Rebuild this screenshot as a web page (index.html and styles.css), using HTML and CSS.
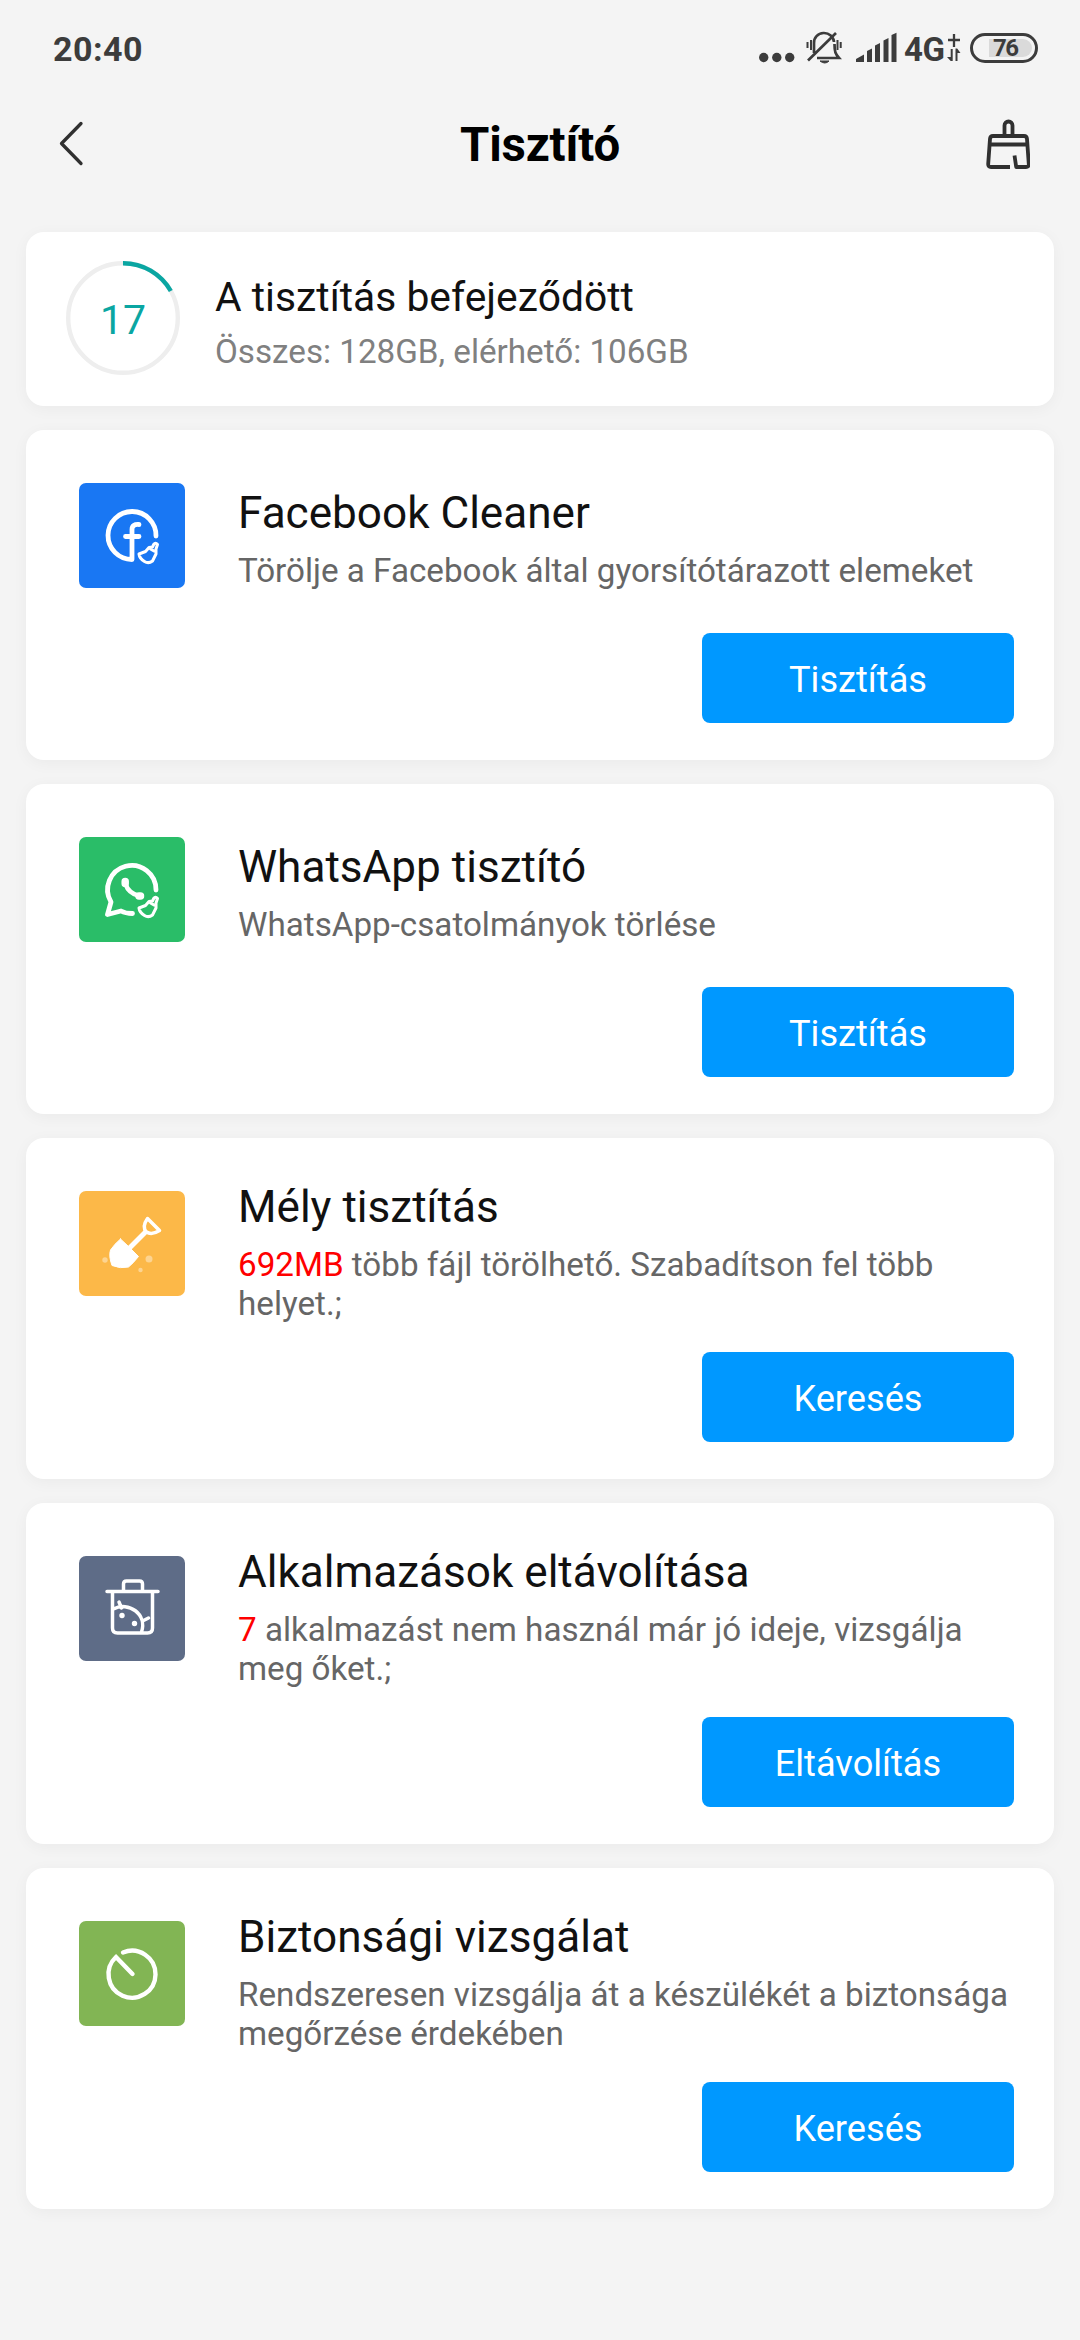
FILE: index.html
```html
<!DOCTYPE html>
<html lang="hu">
<head>
<meta charset="utf-8">
<title>Tisztító</title>
<link rel="stylesheet" href="styles.css">
</head>
<body>
<header class="status">
  <span class="clock">20:40</span>
  <div class="indicators">
    <svg class="dots" width="36" height="60" viewBox="0 0 36 60"><circle cx="4.7" cy="37.5" r="4.7"/><circle cx="17.8" cy="37.5" r="4.7"/><circle cx="30.7" cy="37.5" r="4.7"/></svg>
    <svg class="bell" width="36" height="60" viewBox="0 0 36 60" fill="none" stroke="#3c3c3c" stroke-width="2.7"><path d="M8 33V23a10 9.5 0 0 1 20-1M28.500 24c0 8 1 10 4.500 14H11M2 40.500 30 13"/><path d="M14 41h9q-4 4-9 0Z" fill="#3c3c3c" stroke-width="1"/><path d="M1.500 22v6M5 20v10M31.500 20v10M34.700 22v6" stroke-width="2"/></svg>
    <svg class="signal" width="41" height="60" viewBox="0 0 41 60"><path d="M0 42V39L8 34.500V42ZM11 42V31l5-2.500V42ZM19 42V25.500l5-2.500V42ZM27.500 42V20.500l5-2.500V42ZM35.500 42V15l5-2.200V42Z"/></svg>
    <span class="network">4G</span>
    <svg class="traffic" width="14" height="60" viewBox="0 0 14 60"><path d="M1 20h12M7 14v13" fill="none" stroke="#3c3c3c" stroke-width="2.300"/><path d="M3.700 29h2v12h-2L0 37h3.700ZM8.500 41V28.500h1.700l3.300 4.500h-3V41Z"/></svg>
    <span class="battery"><span class="level">76</span></span>
  </div>
</header>
<nav class="toolbar">
  <svg class="back" width="26" height="46" viewBox="0 0 26 46"><path d="M23 2.500 3.500 22.500 23 42.500" fill="none" stroke="#303030" stroke-width="3.300" stroke-linecap="round" stroke-linejoin="round"/></svg>
  <h1>Tisztító</h1>
  <svg class="brush" width="44" height="50" viewBox="0 0 44 50" fill="none" stroke="#303030" stroke-width="3.800" stroke-linejoin="round"><path d="M18.500 17V6.500a4 4 0 0 1 8 0V17M24 48H5Q2 48 2.200 45L4 20Q4.200 17 7 17H38Q40.800 17 41 20L42.800 45Q43 48 40 48H30.200L28.500 36.500M4 25.500H41"/></svg>
</nav>
<main>
  <section class="card summary">
    <div class="ring">
      <svg width="114" height="114" viewBox="0 0 114 114" fill="none" stroke-width="4.400"><circle cx="57" cy="57" r="54.800" stroke="#eee"/><path d="M57 2.200A54.800 54.800 0 0 1 104.800 30" stroke="#0aa6a2"/></svg>
      <span>17</span>
    </div>
    <div>
      <h2>A tisztítás befejeződött</h2>
      <p>Összes: 128GB, elérhető: 106GB</p>
    </div>
  </section>

  <section class="card single">
    <svg class="icon facebook" viewBox="0 0 105 105"><path d="M52.500 76.500A24 24 0 1 1 76.500 53M52.500 76.500V46.500q0-5.500 7-5M46 53.500H59.500" stroke-width="4.800"/><path class="broom" d="M73 64 74.200 61.500Q76 59 78 61.500L76.500 66V71L73 78Q69 81 65 78.500Q60 75.500 59.500 71L66 68.500 69.500 64.500ZM71 66 74.500 68"/></svg>
    <div class="text"><h2>Facebook Cleaner</h2><p>Törölje a Facebook által gyorsítótárazott elemeket</p></div>
    <button>Tisztítás</button>
  </section>

  <section class="card single">
    <svg class="icon whatsapp" viewBox="0 0 105 105"><path d="M76.500 53A24.200 24.200 0 1 0 31.500 65L28 77.500 41.500 74Q46 76.500 53 76.500" stroke-width="4.800"/><path d="M46 47Q49 56.500 60 59" stroke-width="4.500"/><path d="M45.700 44.500V46.500M59.500 59h1.500" stroke-width="7.500"/><path class="broom" d="M73 64 74.200 61.500Q76 59 78 61.500L76.500 66V71L73 78Q69 81 65 78.500Q60 75.500 59.500 71L66 68.500 69.500 64.500ZM71 66 74.500 68"/></svg>
    <div class="text"><h2>WhatsApp tisztító</h2><p>WhatsApp-csatolmányok törlése</p></div>
    <button>Tisztítás</button>
  </section>

  <section class="card">
    <svg class="icon deep" viewBox="0 0 105 105"><path d="M41 48 48.500 55 59 65.500Q53 73 49 76Q41 78 32.500 74.500Q29 65 31 59Q35 53 41 48Z" fill="#fff" stroke-width="1"/><path d="M50 57 66.500 40.500" stroke-width="5" stroke-linecap="butt"/><path d="M68 27.500 80 39.500Q72 44.500 67 41Q62 36 68 27.500Z" stroke-width="3.500"/><g fill="#fff" fill-opacity=".4" stroke="none"><circle cx="25.500" cy="69" r="2.700"/><circle cx="69.500" cy="68" r="3.500"/><circle cx="61" cy="79" r="2.200"/></g></svg>
    <div class="text"><h2>Mély tisztítás</h2><p><em>692MB</em> több fájl törölhető. Szabadítson fel több helyet.;</p></div>
    <button>Keresés</button>
  </section>

  <section class="card">
    <svg class="icon apps" viewBox="0 0 105 105"><path d="M27.500 35.500H78.500M33 36V72Q33 77 38 77H68Q73 77 73 72V36M44 35V28Q44 25 47 25H60Q63 25 63 28V35M34 53C49 45 68 58 62 76M42 52 39.500 46M63 65 69 62" stroke-width="3.500"/><g fill="#fff" stroke="none"><circle cx="42.500" cy="59.500" r="2.700"/><circle cx="55" cy="67.500" r="2.700"/></g></svg>
    <div class="text"><h2>Alkalmazások eltávolítása</h2><p><em>7</em> alkalmazást nem használ már jó ideje, vizsgálja meg őket.;</p></div>
    <button>Eltávolítás</button>
  </section>

  <section class="card">
    <svg class="icon security" viewBox="0 0 105 105"><path d="M43.500 31.500A23.500 23.500 0 1 1 36.500 36L53 53" stroke-width="4.400" stroke-linejoin="miter"/></svg>
    <div class="text"><h2>Biztonsági vizsgálat</h2><p>Rendszeresen vizsgálja át a készülékét a biztonsága megőrzése érdekében</p></div>
    <button>Keresés</button>
  </section>
</main>
</body>
</html>
```

FILE: styles.css
```css
* { box-sizing: border-box; }
body { margin: 0; min-height: 2340px; background: #f4f4f4; font-family: Roboto, "Noto Sans", sans-serif; color: #111; }
h1, h2, p { margin: 0; font-weight: 400; }
svg { display: block; flex: none; }

.status { height: 96px; padding: 0 42px 0 53px; display: flex; justify-content: space-between; align-items: center; color: #3c3c3c; fill: #3c3c3c; }
.clock { font-size: 34px; font-weight: 700; letter-spacing: .5px; line-height: 40px; padding-top: 2px; }
.indicators { display: flex; align-items: center; height: 60px; margin-top: 4px; }
.bell { margin-left: 11px; }
.signal { margin-left: 14px; }
.network { font-size: 33px; font-weight: 700; line-height: 40px; width: 41px; margin-left: 7px; letter-spacing: -.5px; }
.traffic { margin-left: 2px; }
.battery { width: 68px; height: 30px; margin-left: 9px; margin-top: -4px; border: 3px solid #3c3c3c; border-radius: 15px; padding: 3px 3px 3px 16px; }
.level { display: block; height: 18px; background: #dadada; border-radius: 0 9px 9px 0; padding-left: 4px; font-size: 24px; line-height: 19px; font-weight: 700; letter-spacing: -1.5px; }

.toolbar { height: 136px; padding: 0 50px 0 58px; display: grid; grid-template-columns: 50px 1fr 50px; align-items: center; }
.toolbar h1 { font-size: 47.4px; font-weight: 700; text-align: center; color: #000; line-height: 56px; letter-spacing: -.2px; margin-top: -38px; padding-right: 8px; }
.back, .brush { margin-top: -40px; }
.brush { justify-self: end; }

main { padding: 0 26px; display: flex; flex-direction: column; gap: 24px; }
.card { height: 341px; padding: 40px 40px 37px 53px; background: #fff; border-radius: 18px; box-shadow: 0 3px 16px rgba(0, 0, 0, .045); display: grid; grid-template-columns: 106px 1fr; column-gap: 53px; grid-template-rows: 1fr 90px; }
.card.single { height: 330px; }
.single .text { padding-top: 14px; }
.icon { width: 106px; height: 105px; margin-top: 13px; border-radius: 7px; fill: none; stroke: #fff; stroke-linecap: round; stroke-linejoin: round; }
.icon .broom { stroke-width: 3; }
.facebook { background: #1977f3; }
.whatsapp { background: #2abd68; }
.deep { background: #fcb848; }
.apps { background: #5e6c87; }
.security { background: #82b554; }
.text h2 { font-size: 44.1px; line-height: 56px; padding-top: 1px; }
.text p { font-size: 33.2px; line-height: 39px; color: #666; padding-top: 10px; }
.text em { font-style: normal; color: #f00; }
button { grid-column: 2; justify-self: end; width: 312px; height: 90px; border: 0; border-radius: 8px; background: #0098ff; color: #fff; font: 400 36.2px/42px Roboto, sans-serif; padding: 4px 0 0; }

.card.summary { height: 174px; padding: 0 40px; display: flex; gap: 35px; }
.ring { width: 114px; height: 114px; margin-top: 29px; display: grid; }
.ring svg, .ring span { grid-area: 1 / 1; }
.ring span { place-self: center; font-size: 41px; color: #0aa6a2; padding-top: 3px; }
.summary h2 { font-size: 40.8px; line-height: 48px; margin-top: 41px; }
.summary p { font-size: 33.2px; line-height: 39px; color: #808080; margin-top: 11px; }
```
